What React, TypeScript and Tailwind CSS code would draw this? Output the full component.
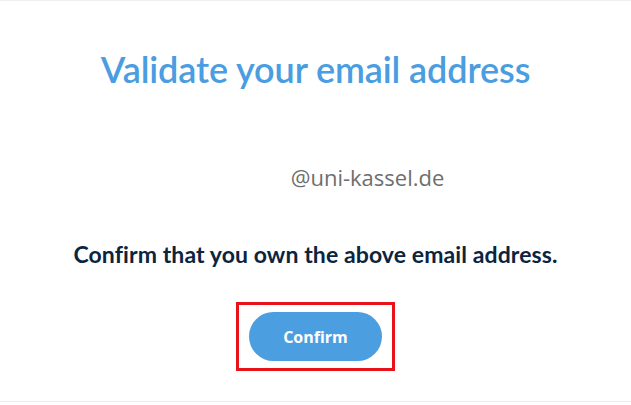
import React from 'react';

export default function App() {
    return (
        <div className="w-[631px] h-[405px] bg-white flex flex-col overflow-hidden">
            <div className="h-px bg-[#efefef]" />
            {/* Card */}
            <div className="flex-1 flex flex-col items-center">
                <h1 className="mt-[46px] text-[36px] leading-[44px] font-semibold text-[#4a9de0] font-['Lato',sans-serif] tracking-[-0.1px]">
                    Validate your email address
                </h1>
                <p className="mt-[73px] pl-[104px] text-[22px] leading-[26px] text-[#6e6e6e] font-['Open_Sans',sans-serif]">
                    @uni-kassel.de
                </p>
                <p className="mt-[50px] text-[23px] leading-[28px] font-bold text-[#0b2440] font-['Lato',sans-serif] tracking-[0.1px]">
                    Confirm that you own the above email address.
                </p>
                <div className="mt-[34px] border-[3px] border-[#e8121b] px-[10px] py-[7px]">
                    <button className="w-[133px] h-[49px] rounded-full bg-[#4b9fe1] text-white text-[16px] font-bold font-['Open_Sans',sans-serif]">
                        Confirm
                    </button>
                </div>
            </div>
            <div className="h-px bg-[#ececec] mb-[3px]" />
        </div>
    );
}
